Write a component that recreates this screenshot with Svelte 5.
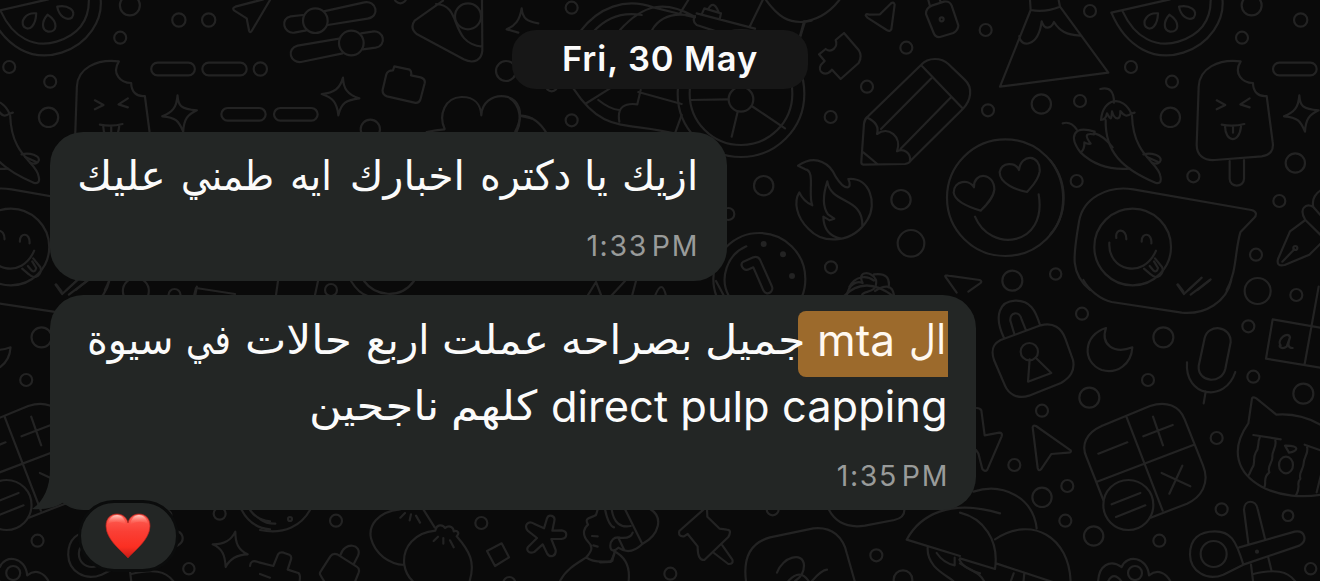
<script>
  // Each word: text, column width, and the gap that precedes it.
  const greeting = [
    ['ازيك', 76, 0], ['يا', 24, 14], ['دكتره', 91, 13], ['اخبارك', 115, 15],
    ['ايه', 42, 18], ['طمني', 93, 16], ['عليك', 89, 15]
  ];
  const report = [
    ['جميل', 100, -7], ['بصراحه', 131, 13], ['عملت', 107, 12], ['اربع', 63, 13],
    ['حالات', 107, 14], ['في', 45, 14], ['سيوة', 86, 13]
  ];
  const result = [['كلهم', 86, 14], ['ناجحين', 130, 12]];

  // Stretches a run of text horizontally so it fills its column.
  function fit(node, width) {
    const natural = node.offsetWidth;
    if (natural) node.style.transform = `scaleX(${width / natural})`;
  }
</script>

{#snippet dots(list)}
  {#each list as [x, y, r]}<circle cx={x} cy={y} r={r} />{/each}
{/snippet}

{#snippet words(list)}
  {#each list as [text, width, gap]}<span class="run" style="width:{width}px;margin-right:{gap}px"><span class="ar" use:fit={width}>{text + ' '}</span></span>{/each}
{/snippet}

{#snippet tile()}
  <g transform="translate(1050 0) scale(.33333)">
    {@render dots([[120,33,18],[243,201,18],[366,245,18],[90,303,18],[361,352,29],[605,16,30],[576,113,18],[752,60,20],[430,529,18],[80,543,18],[736,489,29],[688,603,18],[618,764,18],[17,822,17]])}
    <path d="M184 38 L360 -2 M184 38 C230 145 315 185 400 158 C480 132 525 60 517 -5 M218 34 C255 115 320 145 385 125 C450 105 484 60 482 -5" />
    <path d="M324 40 C290 37 277 65 287 80 C304 96 323 76 324 40Z M358 44 C340 64 339 90 360 95 C389 97 390 65 358 44Z M387 20 C392 48 413 63 431 53 C447 32 418 13 387 20Z" />
    <path d="M572 184 C505 176 448 205 446 260 L440 435 C440 466 462 482 494 480 L635 469 C661 465 672 451 668 426 L650 288 C625 291 609 275 609 249 C578 249 549 222 572 184Z M539 483 V536 C539 564 582 564 582 536 V480" />
    <path d="M500 301 L526 315 L500 328 M599 295 L571 313 L599 322 M515 374 Q550 381 583 372 M525 379 C526 428 568 432 573 379 M549 379 V398" />
    <path d="M748 286 C750 318 758 328 806 331 C778 344 767 357 765 395 C752 363 743 352 702 349 C733 337 745 323 748 286Z" />
    <rect x="669" y="188" width="131" height="38" rx="19" />
    <path d="M151 267 C181 260 192 276 192 308 M153 360 C158 292 220 285 244 341 L254 338 M153 360 C165 360 169 350 171 340 C184 364 184 358 186 334 C194 363 213 362 211 333 C222 348 231 351 244 341 M167 360 C165 455 215 506 318 549 C332 552 335 542 331 528 C325 485 250 470 246 347" />
    <path d="M38 370 C57 364 71 375 80 388 M92 458 C55 410 70 375 134 395 M92 458 C102 449 104 440 103 427 C113 433 117 432 122 431 C105 408 105 399 132 403 L134 395 M92 458 C130 494 176 511 239 506 M134 400 Q161 407 188 442 M280 463 C306 456 334 468 332 481 C329 492 320 493 306 488 M291 471 L323 485" />
    <path d="M0 480 C55 550 50 650 0 704" />
    <path d="M120 870 C60 820 69 770 87 665 C98 597 169 555 250 568 L604 630 C619 633 622 644 612 654 L571 697 C554 755 561 815 530 870 M384 853 L400 874 M415 870 L455 833 M443 870 L482 838" />
    <circle cx="248" cy="741" r="115" />
    <path d="M199 714 C194 684 230 684 229 718 M275 725 C274 696 307 697 304 730 M178 728 C173 812 280 840 318 752 M282 806 L302 823 C322 843 345 820 336 801 L315 775 M299 798 L311 812 Q320 819 324 804 L312 784" />
    <path d="M766 660 C745 625 768 609 790 621 C784 596 799 577 817 568 M766 660 L720 694 L684 777 C680 793 687 799 704 795 L778 764 L817 726 M766 660 L817 710 M790 621 L817 652 M697 785 L733 748" /><circle cx="736" cy="744" r="6" />
  </g>
  <g transform="translate(960 280) scale(.33333)">
    {@render dots([[157,2,30],[366,101,18],[610,172,30],[893,33,39],[1009,45,18],[865,139,18],[880,290,18],[1030,341,30],[564,300,18],[388,353,30],[246,392,18],[163,555,18],[322,618,18],[246,652,29],[316,722,18],[401,768,29],[598,782,18],[770,474,18],[785,688,18],[984,707,16],[1052,866,17],[505,675,75]])}
    <path d="M370 0 C386 29 420 58 455 66 L665 98 C735 105 800 66 814 0 M652 14 L672 42 L718 0 M692 44 L750 0" />
    <path d="M132 174 C99 104 121 64 165 62 C211 60 227 93 239 132 M163 162 L151 122 C149 95 179 91 185 119 L198 151 M122 180 L242 136 C280 125 305 145 316 176 L339 240 C346 274 329 293 303 309 L207 347 C172 359 145 341 135 317 L102 240 C91 207 101 191 122 180Z" />
    <circle cx="208" cy="215" r="26" /><path d="M209 238 L204 305 L274 279 L227 233" />
    <path d="M438 144 C370 164 364 246 425 270 C472 283 514 252 517 202 C462 223 421 194 438 144Z" />
    <path d="M734 174 C745 130 814 136 812 187 L796 266 C785 314 713 309 716 258Z M681 247 C673 350 795 371 826 276 M737 335 L731 370" />
    <path d="M938 118 L1085 144 M938 118 L918 236 L1085 264 M1076 20 L1034 252 M962 196 C949 180 984 151 990 172 L980 200 C964 211 953 195 962 196 M990 172 Q978 205 998 204" />
    <path d="M425 438 L570 378 C620 361 658 378 674 418 L729 556 C751 610 723 652 681 671 L572 713 M425 438 C378 459 362 495 380 533 L430 660 M500 412 L608 692 M411 605 L700 495 M415 521 L502 487 M550 469 L638 435 M579 410 L609 496 M605 579 L691 619 M667 557 L628 641 M455 673 L541 639 M468 711 L556 676" />
    <path d="M865 430 L876 355 Q880 349 890 356 L949 404 C1000 400 1040 410 1085 436 M865 430 C808 510 832 580 905 620 C960 650 1030 653 1085 644 M880 465 L962 478 M900 470 C890 492 900 502 887 518 C876 538 889 550 876 565 L867 584 M946 482 C951 500 935 514 937 531 C939 548 920 558 928 577 C908 593 919 606 914 619 M975 497 C1026 496 1010 516 987 518Z M1034 494 L1085 512 M1041 501 C1047 520 1031 531 1031 550 C1031 568 1015 577 1021 596 C1007 611 1024 616 1009 644 M1085 576 L1070 637" /><ellipse cx="978" cy="555" rx="21" ry="25" />
    <path d="M865 790 L852 690 C852 658 887 657 893 687 L915 776 M838 802 L1004 755 C1035 750 1044 781 1018 797 L850 854 M850 854 L790 884 C740 905 691 873 690 824 C690 777 718 754 765 754 C810 754 827 777 850 854 M873 854 L880 910 M925 833 L934 870 M880 882 C940 867 985 870 1010 910" /><circle cx="761" cy="822" r="39" /><circle cx="891" cy="815" r="3" />
    <path d="M414 910 C415 855 450 837 485 861 C500 823 562 829 567 886 C592 866 620 877 634 910" /><circle cx="525" cy="879" r="21" /><path d="M444 905 Q460 872 485 905" />
    <path d="M50 384 Q60 384 64 391 L74 466 L118 458 Q128 458 125 469 L82 569 Q75 577 67 567 L55 520 L48 510 M218 442 Q219 434 228 438 L332 511 Q335 517 325 518 L274 522 L243 568 Q236 575 233 564Z" />
    <path d="M40 635 C130 605 220 655 230 745 M0 698 C70 715 118 780 105 867 L0 835 M105 778 C215 705 330 770 332 910 M108 850 L290 910 M0 850 C35 873 65 880 75 910 M161 880 L150 910 M193 880 L190 910" />
  </g>
{/snippet}

<main>
  <svg class="doodles" viewBox="0 0 1320 581" aria-hidden="true">
    {@render tile()}
    <g transform="translate(-1121.8 0)">{@render tile()}</g>
    <g transform="scale(.33333)">
      {@render dots([[626,60,20],[781,207,20]])}
      <rect x="607" y="188" width="133" height="38" rx="19" /><rect x="664" y="324" width="133" height="38" rx="19" />
      <path d="M810 0 L755 93 Q750 101 747 91 L740 55 L702 31 Q696 24 706 20 L790 -2" />
    </g>
    <g transform="translate(260 0) scale(.33333)">
      {@render dots([[421,-8,18],[331,388,29],[738,213,30],[166,62,37],[274,129,37],[624,49,39]])}
      <rect x="42" y="324" width="131" height="38" rx="19" />
      <path d="M129 45 L92 49 C60 55 70 102 103 98 L139 91 M191 34 L313 7 C350 0 361 50 323 56 L203 75 M237 116 L113 137 C78 146 91 190 123 186 L248 160 M303 100 L336 95 C372 88 382 137 347 143 L309 148" />
      <path d="M249 233 C250 265 262 284 298 295 C259 300 244 308 235 346 C231 307 218 293 185 282 C224 279 240 265 249 233Z M785 25 C788 57 802 64 835 70 M740 88 C765 77 779 62 785 25 M740 88 L775 98" />
      <path d="M399 211 L403 199 L449 209 Q456 215 453 226 L482 232 Q497 237 494 250 L481 299 Q477 311 463 308 L381 289 Q366 284 368 269 L379 223 Q383 211 399 211Z M464 62 L549 2 M464 62 C453 77 457 91 470 102 L611 178 C644 194 665 178 667 152 L666 0 M528 12 C610 15 565 130 667 140 M554 387 C535 345 554 293 604 291 C643 290 662 313 664 346 C665 309 695 285 734 289 C778 295 794 340 766 394 M782 348 L815 355 M500 396 Q528 390 553 388" />
    </g>
    <g transform="translate(510 0) scale(.33333)">
      {@render dots([[185,23,18],[185,361,18],[693,298,37],[693,281,154],[693,281,190],[125,256,18]])}
      <path d="M210 95 C265 22 345 -8 430 22 L510 42 L555 52 M250 95 Q310 30 395 45 M330 90 C400 12 465 0 550 48 M425 92 Q460 30 550 48 M510 40 L535 0 M720 78 L762 -8 M762 -8 C800 46 835 78 905 62 M555 48 Q545 62 560 75 L630 98 M560 40 L735 86 M575 43 L583 25 L633 40 L629 58 M594 28 Q610 -2 625 34 M885 65 L868 120 M190 265 C285 410 350 360 510 405 M230 309 L300 265 M265 300 Q300 328 328 330 M328 365 C320 320 345 308 382 313 L392 270 M385 276 L515 312 M515 345 L495 400 M540 300 L655 298 M683 335 L665 410 M725 318 L825 385 M0 295 C30 315 37 360 20 395 M35 347 Q80 350 110 400" />
    </g>
    <g transform="translate(800 0) scale(.33333)">
      {@render dots([[557,90,18],[319,143,18],[201,260,18],[92,351,18],[564,331,18],[724,312,29],[303,599,29],[333,730,40],[93,802,18],[425,58,6],[616,593,175]])}
      <path d="M0 66 C54 62 90 36 118 0 M12 64 L0 108 M197 46 Q198 40 208 44 L240 43 L272 11 Q281 3 284 14 L274 88 Q270 96 260 90 L202 53Z M378 42 Q377 25 395 17 L432 5 Q449 2 455 17 L475 76 Q475 91 460 99 L420 111 Q407 113 401 99Z M385 0 L389 15 M418 -6 L422 7" />
      <path d="M132 99 L176 150 Q188 168 176 189 L122 237 L96 209 C75 233 51 215 63 194 L74 183 L57 163 L77 147 C94 160 115 142 107 120Z" />
      <path d="M202 351 L363 195 C385 170 425 173 445 192 L494 239 C520 263 513 302 489 326 L334 480 Q327 491 315 492 L190 494 Q183 493 184 484 L192 371 Q194 357 202 351 M363 195 L489 326 M243 387 L394 235 M302 446 L453 292 M202 353 C222 362 239 375 231 402 C266 377 307 411 291 454 C312 443 333 460 330 482 M190 457 L232 492" />
      <path d="M600 260 L692 30 L690 0 M692 30 Q735 38 780 20 L776 0 M600 260 L925 218 L780 20 M658 108 C660 144 715 143 725 64 C734 92 753 86 762 66 C779 94 800 104 840 107" />
      <path d="M522 562 C520 515 583 516 583 569 C580 595 558 616 542 632 C515 624 465 608 461 578 C461 542 507 535 522 562Z M657 510 C662 460 723 462 719 515 C714 545 693 561 681 576 C651 570 598 552 599 516 C605 486 646 485 657 510Z M525 650 C570 760 743 740 716 583" />
      <path d="M436 830 Q434 825 445 827 L539 840 Q549 845 539 851 L505 875 M436 830 L470 878" />
    </g>
    <g transform="translate(700 120) scale(.33333)">
      {@render dots([[191,197,29],[85,282,18],[178,477,138]])}
      <g class="fill"><circle cx="191" cy="372" r="9" /><circle cx="249" cy="403" r="9" /><circle cx="276" cy="468" r="9" /></g>
      <path d="M294 137 C350 100 392 133 407 170 C435 215 459 208 445 177 C510 171 532 251 503 298 C460 370 371 375 325 326 C288 290 281 244 298 217 Q310 244 337 256 C323 225 347 151 316 148Z M382 184 C369 224 368 261 384 283 L403 296 L389 301 L370 290 Q371 345 423 356 M382 184 C393 255 490 229 487 318" />
      <path d="M139 379 C80 404 59 475 85 525 M160 442 L190 511 C199 530 224 516 215 497 L180 419 Q173 408 160 412 L130 425 C118 432 129 453 143 449Z M440 530 C445 490 472 482 488 489 C468 451 517 452 528 480 C535 522 490 510 486 525 M448 501 C465 467 500 465 522 482 M522 463 C559 458 570 475 566 502 M525 513 Q575 482 582 525" />
    </g>
    <g transform="translate(0 400) scale(.33333)">
      {@render dots([[659,341,18]])}
      <path d="M706 395 C706 430 715 450 743 463 C710 464 690 475 677 501 C675 464 667 446 638 433 C674 433 693 421 706 395Z M725 330 C745 368 775 385 810 388 M750 330 Q773 362 810 364" />
    </g>
    <g transform="translate(260 495) scale(.33333)">
      {@render dots([[228,77,18],[664,84,18],[748,264,18],[90,72,6]])}
      <path d="M0 105 C75 120 125 90 150 45 M0 72 Q20 87 46 86 M0 203 L40 213 L54 178 Q60 170 71 173 L88 179 Q96 184 93 193 L83 224 L115 234 Q122 238 119 258 M0 237 L30 248 M-30 213 Q-28 193 -8 200 L0 203 M181 240 Q177 235 184 226 L211 184 Q218 174 232 178 L290 215 Q300 221 296 233 L286 258 M181 240 L192 258 M241 181 C253 137 308 148 294 182 L281 208" />
      <path d="M420 43 C350 50 325 95 333 130 C345 178 388 207 433 210 M490 43 L524 97 M433 210 C426 157 465 112 526 107 C530 86 548 88 555 99 C570 88 581 99 581 109 C593 105 600 114 590 124 C630 170 646 202 629 258 M433 210 Q438 240 458 258 M421 68 L435 54 M449 76 L453 58 M480 83 L468 62 M521 138 L534 125 M550 146 V129 M581 157 L570 136" />
      <path d="M681 168 L725 145 L747 187 L705 213Z M852 100 L861 70 C866 56 887 62 883 78 L877 107 L905 106 C924 109 923 130 904 132 L874 132 L887 165 C889 184 870 190 861 175 L848 148 L824 170 C805 179 795 163 808 152 L831 129 L803 107 C791 91 805 75 822 86Z M900 258 C920 220 955 203 979 187 C991 173 1003 158 985 141 C963 117 973 98 984 89 C971 67 993 70 1008 60 L1013 43 M979 187 Q1000 205 1057 198 L1064 169 M996 123 L1013 124 M1000 151 L1013 155" />
    </g>
    <g transform="translate(600 495) scale(.33333)">
      {@render dots([[211,236,18],[518,43,18],[829,181,18],[909,254,28]])}
      <path d="M150 42 C190 65 180 118 127 147 L75 43 M127 147 Q90 183 55 158 C23 190 21 119 60 128 Q92 132 98 113 M55 128 L73 166 M35 43 Q44 102 92 93 M15 43 Q25 92 42 97 M43 169 Q93 195 86 258 M0 202 L32 201 L43 177" />
      <path d="M311 43 L238 108 Q234 126 252 124 L263 117 L293 154 Q292 196 313 195 L385 126 Q397 104 380 104 L359 101 L322 65 L321 43 M342 174 L385 207 Q401 208 397 194 L367 151" />
      <path d="M686 43 C710 90 755 98 795 92 L883 75 Q915 68 913 43 M438 258 C427 175 463 140 510 127 L640 100 C696 93 731 128 741 177 L764 258 M531 233 C548 185 610 168 612 211 Q612 242 585 258 M565 258 Q600 220 626 258 M636 258 Q665 225 681 224" />
      <path d="M1200 55 C1050 10 960 60 920 134 L1080 183 M983 158 C980 215 1035 238 1060 258 M1010 174 Q1030 204 1064 211 L1064 188 M1078 194 Q1090 222 1140 235" />
    </g>
    <path d="M193 300 L196 288 L235 294 M276 295 L278 281 M315 295 L318 281 M351 281 Q359 294 368 296 M364 281 C375 296 400 300 414 281 M588 295 L596 282 L601 295 M611 296 L625 281 M636 281 L632 296 M655 296 Q662 278 666 296 M716 281 L724 296 M844 296 Q865 275 893 296" /><circle cx="331" cy="290" r="6" />
  </svg>

  <div class="date">Fri, 30 May</div>

  <article class="bubble first">
    <p class="line" dir="rtl">{@render words(greeting)}</p>
    <time>1:33<i></i>PM</time>
  </article>

  <article class="bubble second">
    <svg class="tail" viewBox="0 0 56 42" aria-hidden="true"><path d="M20 0 C20 18 14 32 2 40 C16 41 27 38 34 33 C40 38 46 40 54 40 V0Z" /></svg>
    <p class="line" dir="rtl">
      <mark><span class="run" style="width:37px"><span class="ar" use:fit={37}>ال</span></span><span class="run mta" style="width:78px"><span class="la" use:fit={78}>mta</span></span></mark>{@render words(report)}
    </p>
    <p class="line" dir="rtl">
      <span class="run" style="width:397px"><span class="la" use:fit={397}>direct pulp capping</span></span>{@render words(result)}
    </p>
    <time>1:35<i></i>PM</time>
    <div class="reaction">
      <svg viewBox="0 0 46 46" role="img" aria-label="heart">
        <defs>
          <linearGradient id="red" x1="0" y1="0" x2="0" y2="1"><stop offset="0" stop-color="#ff6257" /><stop offset=".4" stop-color="#fa3f35" /><stop offset=".75" stop-color="#fb2f22" /><stop offset="1" stop-color="#c81b16" /></linearGradient>
          <linearGradient id="shine" x1="0" y1="0" x2="0" y2="1"><stop offset="0" stop-color="#ffd3c9" stop-opacity=".95" /><stop offset="1" stop-color="#ff6b5c" stop-opacity="0" /></linearGradient>
        </defs>
        <path fill="url(#red)" stroke="#b8221d" stroke-width=".7" d="M23 45 C18 39 1 27 1 13 C1 5 6 1 12 1 C18 1 22 5 23 10 C24 5 28 1 34 1 C40 1 45 5 45 13 C45 27 28 39 23 45Z" />
        <path fill="url(#shine)" d="M3 11 C4 5 8 2 12 2 C17 2 20 6 21 12 C15 8 8 8 3 11Z M43 11 C42 5 38 2 34 2 C29 2 26 6 25 12 C31 8 38 8 43 11Z" />
      </svg>
    </div>
  </article>
</main>

<style>
  :global(body) { background: #0a0a0a; overflow: hidden; }
  main {
    position: relative; box-sizing: border-box; width: 1320px; height: 581px; overflow: hidden;
    padding: 30px 0 0 50px; display: flex; flex-direction: column; align-items: flex-start;
    background: #0a0a0a; color: #fbfbfb; font-family: Inter, "Liberation Sans", sans-serif;
  }
  .doodles {
    position: absolute; inset: 0; width: 1320px; height: 581px; fill: none; stroke: #232323;
    stroke-width: 2.2px; stroke-linecap: round; stroke-linejoin: round;
  }
  .doodles > g { stroke-width: 6.6px; }
  .doodles .fill { fill: #232323; stroke: none; }
  .date {
    position: relative; width: 296px; height: 59px; margin-left: 462px; box-sizing: border-box;
    border-radius: 24px; background: #171717; text-align: center; line-height: 57px;
    font-size: 34.5px; font-weight: 600; letter-spacing: .9px;
  }
  .bubble { position: relative; box-sizing: border-box; background: #232625; border-radius: 33px; }
  .first { width: 677px; height: 149px; margin-top: 43px; padding: 15px 29px 0 31px; }
  .second { width: 926px; height: 215px; margin-top: 14px; padding: 16px 28px 0; }
  .line { margin: 0; height: 66px; display: flex; align-items: stretch; white-space: nowrap; }
  .run { display: block; flex: none; height: 66px; line-height: 59px; }
  .ar, .la { display: inline-block; vertical-align: top; transform-origin: right center; white-space: normal; width: max-content; }
  .ar { font-family: "DejaVu Sans", sans-serif; font-size: 41px; }
  .la { font-size: 43px; }
  mark {
    box-sizing: border-box; display: flex; flex: none; width: 150px; height: 66px; padding-right: 2px;
    background: #9c6a2c; color: #fff8ef; border-radius: 8px 0 0 8px;
  }
  .mta { margin-right: 14px; }
  time {
    display: flex; justify-content: flex-end; margin: 17px -1px 0 0; height: 32px; line-height: 32px;
    color: #999b9a; font-size: 28.5px; letter-spacing: 1.6px;
  }
  time i { width: 4px; }
  .tail { position: absolute; left: -20px; bottom: -1px; width: 56px; height: 42px; fill: #232625; }
  .reaction {
    position: absolute; left: 28px; top: 205px; width: 101px; height: 72px; box-sizing: border-box;
    border: 3px solid #0b0c0c; border-radius: 36px; background: #232625;
    display: flex; align-items: center; justify-content: center;
  }
  .reaction svg { width: 46px; height: 46px; margin-right: 1px; }
</style>
